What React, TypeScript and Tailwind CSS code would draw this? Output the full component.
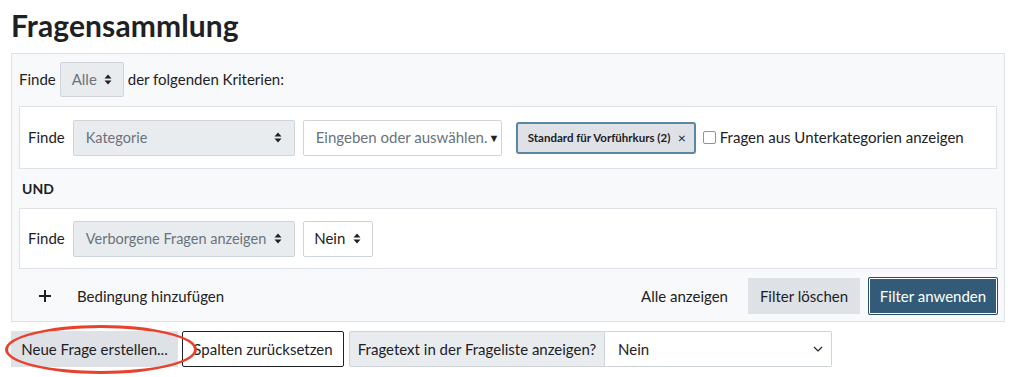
import React from 'react';

function UpDown() {
  return (
    <svg width="8" height="11" viewBox="0 0 8 11" className="shrink-0">
      <path d="M4 0.5 L7.5 4.5 H0.5 Z" fill="#1d2125" />
      <path d="M4 10.5 L7.5 6.5 H0.5 Z" fill="#1d2125" />
    </svg>
  );
}

function GraySelect({ label, width, muted }: { label: string; width: string; muted?: boolean }) {
  return (
    <div
      className={`${width} h-[36px] flex items-center justify-between pl-[12px] pr-[12px] bg-[#e9ecef] border border-[#ced4da] rounded-[2px] ${muted ? 'text-[#6a737b]' : 'text-[#1d2125]'}`}
    >
      <span className="whitespace-nowrap text-[14.5px]">{label}</span>
      <UpDown />
    </div>
  );
}

export default function App() {
  return (
    <div className="relative w-[1024px] h-[377px] bg-white text-[#1d2125] text-[15px] pl-[11px] pt-[6px] overflow-hidden" style={{ fontFamily: 'Lato, "Open Sans", sans-serif' }}>
      <h1 className="text-[30px] leading-[38px] font-bold tracking-[0.1px]">Fragensammlung</h1>

      <div className="mt-[9px] w-[994px] bg-[#f8f9fa] border border-[#dee2e6] px-[7px] pt-[8px] pb-[7px]">
        <div className="flex items-center gap-[4px] h-[35px]">
          <span>Finde</span>
          <div className="w-[64px] h-[35px] flex items-center justify-center gap-[7px] bg-[#e9ecef] border border-[#ced4da] rounded-[2px] text-[#6a737b]">
            <span>Alle</span>
            <UpDown />
          </div>
          <span>der folgenden Kriterien:</span>
        </div>

        <div className="mt-[9px] bg-white border border-[#dee2e6] h-[63px] flex items-center pl-[8px]">
          <span className="mr-[8px]">Finde</span>
          <GraySelect label="Kategorie" width="w-[222px]" muted />
          <div className="ml-[8px] w-[199px] h-[36px] flex items-center pl-[12px] bg-white border border-[#ced4da] rounded-[2px] text-[#6a737b] whitespace-nowrap overflow-hidden">
            <span>Eingeben oder auswählen.</span>
            <span className="text-[#1d2125] text-[11px] ml-[1px] mt-[1px]">▼</span>
          </div>
          <div className="ml-[14px] h-[32px] w-[180px] flex items-center justify-between pl-[10px] pr-[8px] bg-[#dee2e6] border-2 border-[#5a87a3] rounded-[3px] text-[11.5px] font-bold text-[#1d2125] whitespace-nowrap">
            <span>Standard für Vorführkurs (2)</span>
            <span className="text-[14px] font-normal">×</span>
          </div>
          <div className="ml-[7px] w-[13px] h-[13px] border border-[#8c9399] rounded-[2px] bg-white" />
          <span className="ml-[4px] whitespace-nowrap">Fragen aus Unterkategorien anzeigen</span>
        </div>

        <div className="h-[39px] flex items-center pl-[3px] font-bold text-[14px]">UND</div>

        <div className="bg-white border border-[#dee2e6] h-[61px] flex items-center pl-[8px]">
          <span className="mr-[8px]">Finde</span>
          <GraySelect label="Verborgene Fragen anzeigen" width="w-[222px]" muted />
          <div className="ml-[8px] w-[70px] h-[36px] flex items-center justify-center gap-[8px] bg-white border border-[#ced4da] rounded-[2px]">
            <span>Nein</span>
            <UpDown />
          </div>
        </div>

        <div className="mt-[9px] h-[36px] flex items-center">
          <svg width="12" height="12" viewBox="0 0 12 12" className="ml-[20px]">
            <path d="M6 0 V12 M0 6 H12" stroke="#1d2125" strokeWidth="2" />
          </svg>
          <span className="ml-[26px]">Bedingung hinzufügen</span>
          <span className="ml-auto mr-[20px]">Alle anzeigen</span>
          <div className="h-[36px] w-[112px] flex items-center justify-center bg-[#dee2e6]">Filter löschen</div>
          <div className="ml-[9px] h-[36px] w-[128px] flex items-center justify-center bg-[#335b78] text-white border border-white ring-1 ring-[#2a4d66] rounded-[1px]">Filter anwenden</div>
        </div>
      </div>

      <div className="mt-[9px] flex items-center h-[36px]">
        <div className="h-[36px] w-[167px] flex items-center justify-center bg-[#dee2e6]">
          <span>Neue Frage erstellen...</span>
        </div>
        <div className="ml-[4px] h-[36px] w-[162px] flex items-center justify-center bg-white border border-[#1d2125] rounded-[2px]">Spalten zurücksetzen</div>
        <div className="ml-[5px] h-[36px] w-[256px] flex items-center justify-center bg-[#e9ecef] border border-[#ced4da] rounded-l-[2px]">Fragetext in der Frageliste anzeigen?</div>
        <div className="h-[36px] w-[227px] flex items-center justify-between pl-[13px] pr-[8px] bg-white border border-[#ced4da] border-l-0 rounded-r-[2px]">
          <span>Nein</span>
          <svg width="10" height="6" viewBox="0 0 10 6">
            <path d="M1 1 L5 5 L9 1" fill="none" stroke="#1d2125" strokeWidth="1.2" />
          </svg>
        </div>
      </div>

      {/* red annotation ellipse drawn over the button row */}
      <div className="absolute left-[5px] top-[325px] w-[192px] h-[49px] border-[3px] border-[#e8412c] rounded-[50%] pointer-events-none z-10" />
    </div>
  );
}
